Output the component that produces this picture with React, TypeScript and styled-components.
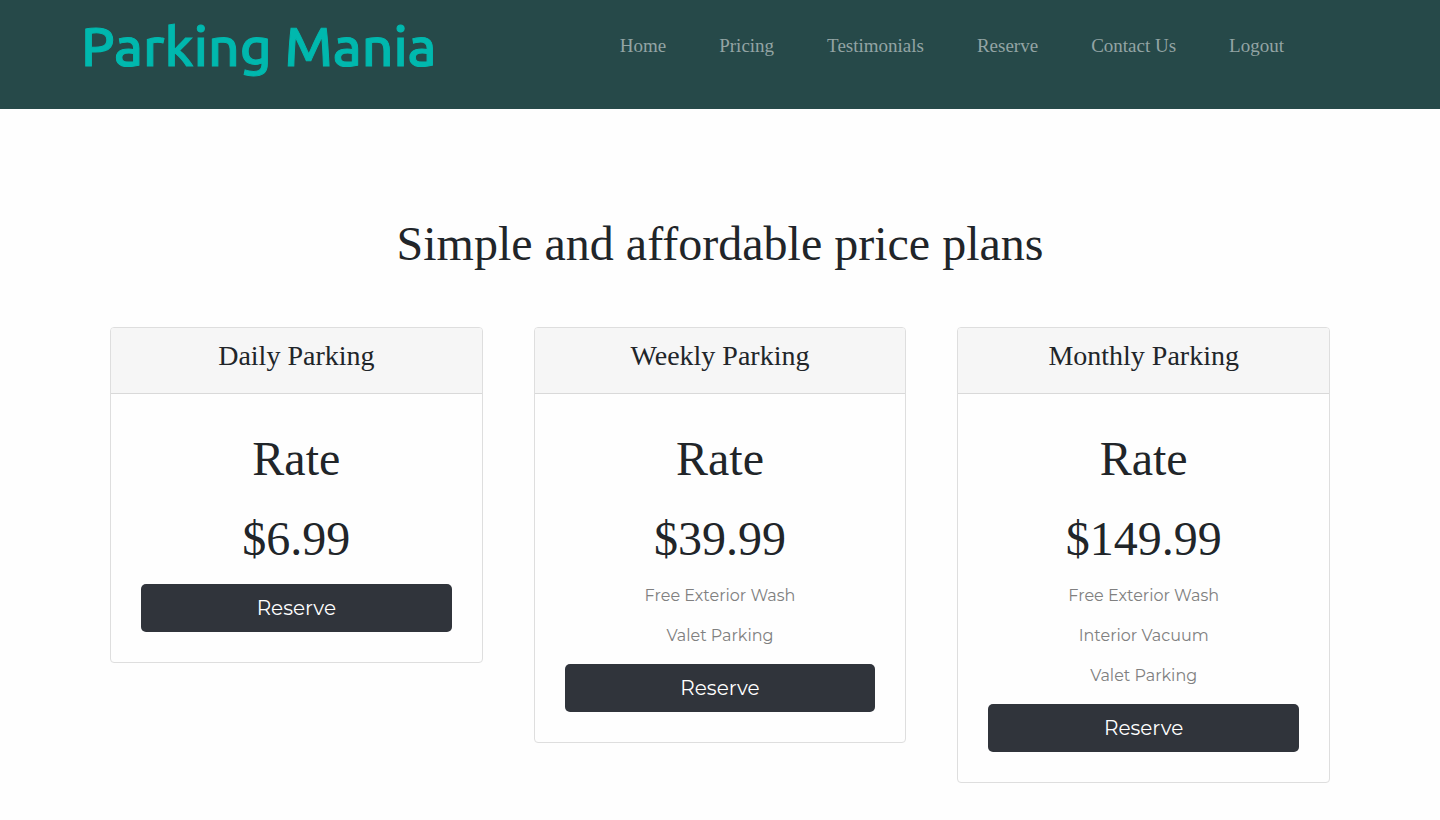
import React from "react";
import styled, { createGlobalStyle } from "styled-components";

const GlobalStyle = createGlobalStyle`
  *, *::before, *::after { box-sizing: border-box; }
  body {
    margin: 0;
    background: #fefefe;
    color: #212529;
    font-family: "Liberation Serif", "Times New Roman", serif;
    line-height: 24px;
  }
  h1, h2, h3, p, ul { margin: 0; padding: 0; font-weight: 400; }
`;

const Header = styled.header`
  display: flex;
  align-items: flex-start;
  justify-content: space-between;
  padding: 8px 130px 26px 81px;
  background: #264949;
`;

const Brand = styled.a`
  color: #00b8ae;
  font-family: Ubuntu, "Noto Sans", sans-serif;
  font-size: 55px;
  line-height: 75px;
  font-weight: 500;
  -webkit-text-stroke: 1px #00b8ae;
  text-decoration: none;
  white-space: nowrap;
`;

const NavList = styled.ul`
  display: flex;
  gap: 1px;
  list-style: none;
  padding-top: 26px;
`;

const NavLink = styled.a`
  display: block;
  padding: 0 26px;
  color: #93a4a4;
  font-size: 19px;
  text-decoration: none;
  white-space: nowrap;
`;

const Pricing = styled.main`
  padding: 108px 85px 36px;
  text-align: center;
`;

const Title = styled.h1`
  font-size: 48px;
  line-height: 54px;
`;

const Plans = styled.div`
  display: grid;
  grid-template-columns: repeat(3, 1fr);
  align-items: start;
  gap: 51px;
  padding: 56px 25px 0;
`;

const Card = styled.section`
  border: 1px solid #dedede;
  border-radius: 4px;
  background: #fefefe;
  overflow: hidden;
`;

const CardHeader = styled.h2`
  padding: 11px 20px 21px;
  border-bottom: 1px solid #d9d9d9;
  background: #f6f6f6;
  font-size: 28px;
  line-height: 33px;
`;

const CardBody = styled.div`
  padding: 36px 30px 30px;
`;

const Figure = styled.p`
  margin-bottom: 22px;
  font-size: 48px;
  line-height: 58px;
  &:nth-child(2) { margin-bottom: 16px; }
`;

const Feature = styled.p`
  margin-bottom: 16px;
  color: #808080;
  font-family: Montserrat, Lato, sans-serif;
  font-size: 16px;
`;

const ReserveButton = styled.button`
  display: block;
  width: 100%;
  padding: 9px 16px;
  border: 0;
  border-radius: 5px;
  background: #30343b;
  color: #fff;
  font-family: Montserrat, Lato, sans-serif;
  font-size: 20px;
  line-height: 30px;
  cursor: pointer;
`;

const links = ["Home", "Pricing", "Testimonials", "Reserve", "Contact Us", "Logout"];

const plans = [
  { name: "Daily Parking", price: "$6.99", features: [] },
  { name: "Weekly Parking", price: "$39.99", features: ["Free Exterior Wash", "Valet Parking"] },
  { name: "Monthly Parking", price: "$149.99", features: ["Free Exterior Wash", "Interior Vacuum", "Valet Parking"] },
];

export default function App() {
  return (
    <>
      <GlobalStyle />
      <Header>
        <Brand href="#home">Parking Mania</Brand>
        <nav aria-label="Main">
          <NavList>
            {links.map((label) => (
              <li key={label}>
                <NavLink href={`#${label.toLowerCase().replace(" ", "-")}`}>{label}</NavLink>
              </li>
            ))}
          </NavList>
        </nav>
      </Header>
      <Pricing>
        <Title>Simple and affordable price plans</Title>
        <Plans>
          {plans.map((plan) => (
            <Card key={plan.name}>
              <CardHeader>{plan.name}</CardHeader>
              <CardBody>
                <Figure>Rate</Figure>
                <Figure>{plan.price}</Figure>
                {plan.features.map((feature) => (
                  <Feature key={feature}>{feature}</Feature>
                ))}
                <ReserveButton type="button">Reserve</ReserveButton>
              </CardBody>
            </Card>
          ))}
        </Plans>
      </Pricing>
    </>
  );
}
